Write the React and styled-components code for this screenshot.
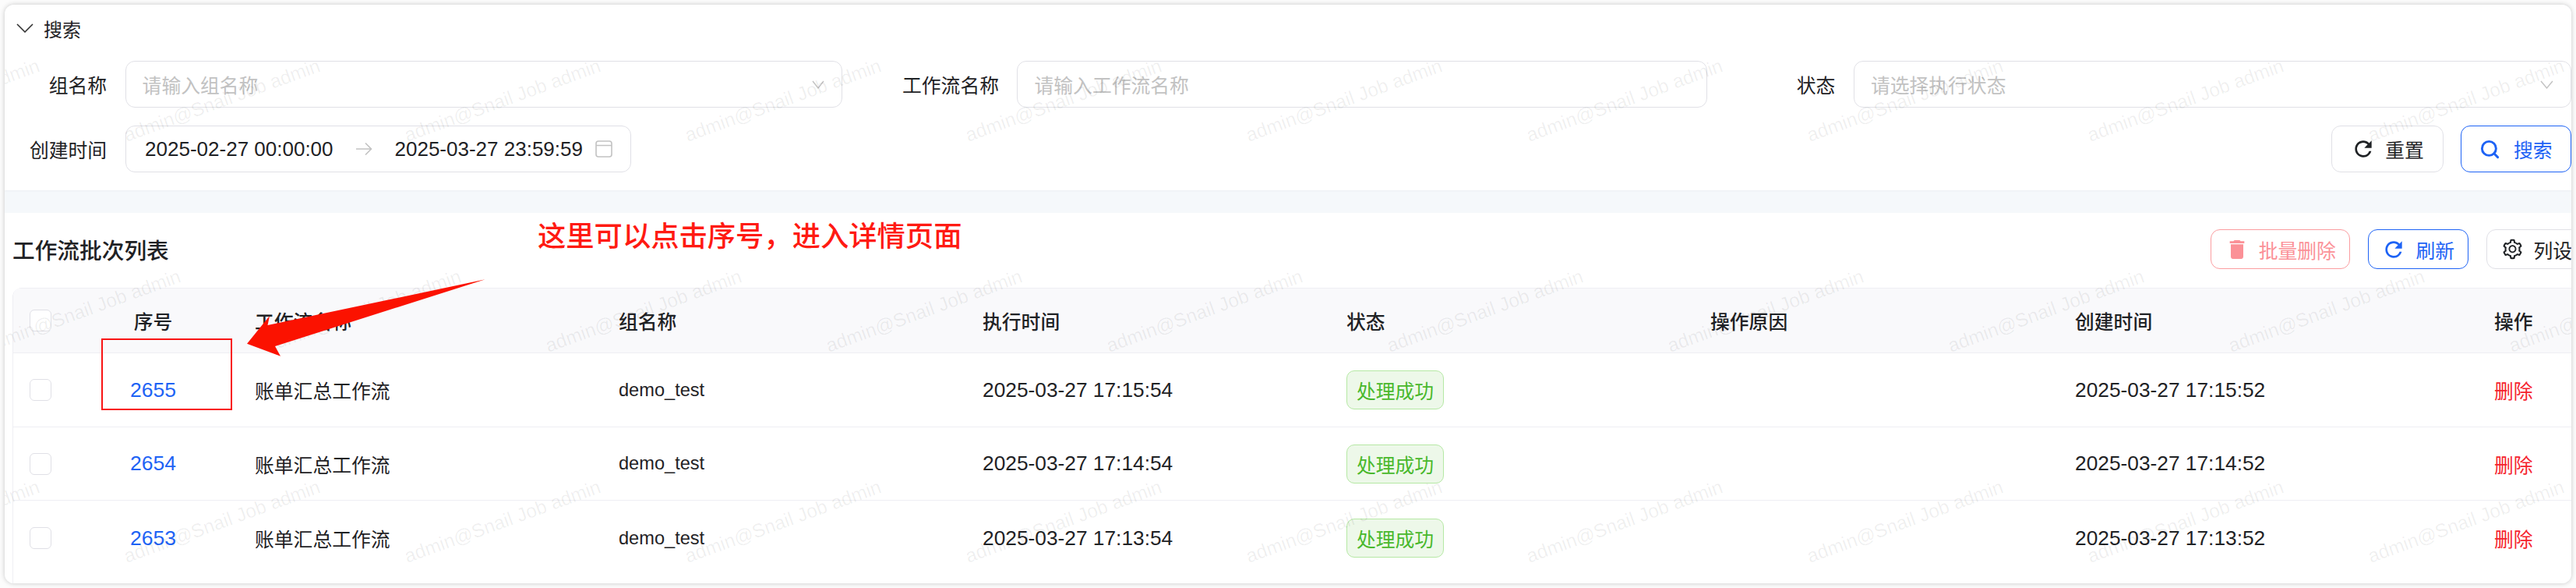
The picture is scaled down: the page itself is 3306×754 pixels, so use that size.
import React from "react";
import styled, { createGlobalStyle } from "styled-components";
import { MdRefresh, MdDelete } from "react-icons/md";
import { AiOutlineSetting } from "react-icons/ai";
import { Search } from "lucide-react";

const Global = createGlobalStyle`
  html, body { margin: 0; padding: 0; background: #fcfcfc; }
  body { font-family: "Liberation Sans", "Noto Sans CJK SC", sans-serif; font-size: 24.8px; color: #1f2225; overflow: hidden; }
  * { box-sizing: border-box; }
`;

const Page = styled.div`
  position: relative;
  width: 3306px;
  height: 754px;
  padding: 6px;
`;
const Frame = styled.div`
  position: relative;
  width: 3294px;
  height: 742px;
  border-radius: 12px;
  overflow: hidden;
  background: #f5f8fb;
  box-shadow: 0 0 6px rgba(0, 0, 0, 0.22);
`;
const SearchCard = styled.section`
  height: 238px;
  background: #fff;
  box-shadow: 0 1px 2px rgba(0, 0, 0, 0.04);
`;
const SearchHeader = styled.div`
  height: 60px;
  margin-bottom: 12px;
  padding-left: 15px;
  display: flex;
  align-items: center;
  gap: 13px;
  font-size: 24px;
`;
const FormGrid = styled.div`
  display: grid;
  grid-template-columns: 154.6px 920.4px 224.5px 886px 187.4px 921px;
  grid-auto-rows: 60px;
  row-gap: 23px;
`;
const Label = styled.label`
  display: flex;
  align-items: center;
  justify-content: flex-end;
  padding-right: 23.5px;
`;
const Field = styled.div`
  display: flex;
  align-items: center;
  height: 60px;
  padding: 0 ${(p) => p.$pr || 22}px 0 ${(p) => p.$pl || 21}px;
  border: 1.5px solid #e0e0e6;
  border-radius: 12px;
  width: ${(p) => p.$width || "100%"};
`;
const Placeholder = styled.span`
  flex: 1;
  color: #c2c2c2;
`;
const DateText = styled.span`
  font-size: 26px;
  white-space: nowrap;
`;
const ArrowSlot = styled.span`
  display: flex;
  width: 79px;
  justify-content: center;
  color: #c2c2c2;
`;
const CalSlot = styled.span`
  display: flex;
  margin-left: 16px;
  color: #c2c2c2;
`;
const Actions = styled.div`
  display: flex;
  justify-content: flex-end;
  gap: 22px;
`;
const Button = styled.button`
  display: inline-flex;
  align-items: center;
  justify-content: center;
  flex: none;
  height: ${(p) => p.$h || 60}px;
  width: ${(p) => p.$w}px;
  gap: ${(p) => p.$gap || 12}px;
  padding: 0;
  background: #fff;
  border: 1.5px solid ${(p) => p.$border || "#e0e0e6"};
  border-radius: 12px;
  color: ${(p) => p.$color || "#1f2225"};
  font: inherit;
`;
const TableCard = styled.section`
  position: absolute;
  left: 0;
  top: 267px;
  width: 3339px;
  height: 475px;
  padding: 21px 0 0 10px;
  background: #fff;
`;
const TableHeader = styled.div`
  display: flex;
  align-items: center;
  justify-content: space-between;
  height: 51px;
  margin-bottom: 24px;
`;
const Title = styled.h2`
  margin: 0;
  font-size: 28.7px;
  font-weight: 500;
`;
const Toolbar = styled.div`
  display: flex;
  gap: 22.5px;
`;
const TableWrap = styled.div`
  height: 379px;
  border-left: 1.5px solid #eeeef3;
  border-top-left-radius: 12px;
  overflow: hidden;
`;
const columns = "70.5px 218px 467px 467px 467px 467px 468px 538px 171px";
const HeadRow = styled.div`
  display: grid;
  grid-template-columns: ${columns};
  height: 84px;
  background: #f9f9fb;
  border-top: 1.5px solid #eeeef3;
  border-bottom: 1.5px solid #eeeef3;
  font-weight: 500;
`;
const Row = styled.div`
  display: grid;
  grid-template-columns: ${columns};
  height: ${(p) => p.$h}px;
  border-bottom: ${(p) => (p.$last ? "none" : "1.5px solid #eeeef3")};
`;
const Cell = styled.div`
  display: flex;
  align-items: center;
  padding-left: 21.5px;
  white-space: nowrap;
`;
const CenterCell = styled.div`
  display: flex;
  align-items: center;
  justify-content: center;
`;
const Check = styled.span`
  display: block;
  width: 28px;
  height: 28px;
  background: #fff;
  border: 1.5px solid #e0e0e6;
  border-radius: 6px;
`;
const SeqLink = styled.a`
  color: #1e63f5;
  font-size: 26.5px;
`;
const DateCell = styled.span`
  font-size: 26.3px;
`;
const GroupText = styled.span`
  font-size: 23.6px;
`;
const Tag = styled.span`
  display: inline-flex;
  align-items: center;
  justify-content: center;
  width: 125px;
  height: 50px;
  background: #edf8e9;
  border: 1.5px solid #b5e8a4;
  border-radius: 10px;
  color: #49b82c;
`;
const DeleteLink = styled.a`
  color: #f5222d;
`;
const WatermarkLayer = styled.div`
  position: absolute;
  inset: 0;
  pointer-events: none;
  overflow: hidden;
`;
const Mark = styled.span`
  position: absolute;
  width: 300px;
  text-align: center;
  font-size: 24.5px;
  line-height: 30px;
  white-space: nowrap;
  color: rgba(0, 0, 0, 0.065);
  transform: translate(-50%, -50%) rotate(-20deg);
`;
const Note = styled.div`
  position: absolute;
  left: 690px;
  top: 281px;
  font-size: 36.3px;
  line-height: 46px;
  font-weight: 500;
  color: #ff1a12;
  white-space: nowrap;
`;
const RedBox = styled.div`
  position: absolute;
  left: 130px;
  top: 434px;
  width: 168px;
  height: 92px;
  border: 2px solid #f91414;
`;
const ArrowArt = styled.svg`
  position: absolute;
  left: 0;
  top: 0;
`;

const Chevron = ({ w = 22, h = 12, color = "#333", sw = 1.6 }) => (
  <svg width={w} height={h} viewBox={`0 0 ${w} ${h}`} fill="none">
    <path d={`M1 1 L${w / 2} ${h - 1} L${w - 1} 1`} stroke={color} strokeWidth={sw} />
  </svg>
);
const ThinArrow = () => (
  <svg width="22" height="18" viewBox="0 0 22 18" fill="none" stroke="currentColor" strokeWidth="1.6">
    <path d="M1 9 H20 M13 1.5 L20.5 9 L13 16.5" />
  </svg>
);
const Calendar = () => (
  <svg width="22" height="22" viewBox="0 0 22 22" fill="none" stroke="currentColor" strokeWidth="1.6">
    <rect x="1" y="1" width="20" height="20" rx="3" />
    <path d="M1 6.5 H21" />
  </svg>
);

const rowsData = [
  { id: 2655, run: "17:15:54", created: "17:15:52", h: 95 },
  { id: 2654, run: "17:14:54", created: "17:14:52", h: 94 },
  { id: 2653, run: "17:13:54", created: "17:13:52", h: 96, last: true },
];
const heads = ["工作流名称", "组名称", "执行时间", "状态", "操作原因", "创建时间", "操作"];

const marks = [];
[123, 393, 663].forEach((y, r) => {
  const start = r % 2 === 0 ? -81 : 100;
  for (let i = 0; i < 10; i++) marks.push({ x: start + i * 360, y });
});

export default function App() {
  return (
    <Page>
      <Global />
      <Frame>
        <SearchCard>
          <SearchHeader>
            <Chevron />
            <span>搜索</span>
          </SearchHeader>
          <FormGrid>
            <Label>组名称</Label>
            <Field>
              <Placeholder>请输入组名称</Placeholder>
              <Chevron w={16} h={11} color="#c2c2c2" sw={1.4} />
            </Field>
            <Label>工作流名称</Label>
            <Field>
              <Placeholder>请输入工作流名称</Placeholder>
            </Field>
            <Label>状态</Label>
            <Field>
              <Placeholder>请选择执行状态</Placeholder>
              <Chevron w={17} h={11} color="#c2c2c2" sw={1.4} />
            </Field>
            <Label>创建时间</Label>
            <Field $width="649.5px" $pl={24.5} $pr={20}>
              <DateText>2025-02-27 00:00:00</DateText>
              <ArrowSlot>
                <ThinArrow />
              </ArrowSlot>
              <DateText>2025-03-27 23:59:59</DateText>
              <CalSlot>
                <Calendar />
              </CalSlot>
            </Field>
            <span />
            <span />
            <span />
            <Actions>
              <Button $w={143.5}>
                <MdRefresh size={32} />
                <span>重置</span>
              </Button>
              <Button $w={142} $gap={17} $border="#1e63f5" $color="#1e63f5">
                <Search size={27} strokeWidth={2.6} />
                <span>搜索</span>
              </Button>
            </Actions>
          </FormGrid>
        </SearchCard>
        <TableCard>
          <TableHeader>
            <Title>工作流批次列表</Title>
            <Toolbar>
              <Button $w={179.5} $h={51} $border="#fb9da0" $color="#fb9197">
                <MdDelete size={32} />
                <span>批量删除</span>
              </Button>
              <Button $w={129.5} $h={51} $border="#1e63f5" $color="#1e63f5">
                <MdRefresh size={32} />
                <span>刷新</span>
              </Button>
              <Button $w={154.5} $h={51} $gap={13}>
                <AiOutlineSetting size={29} />
                <span>列设置</span>
              </Button>
            </Toolbar>
          </TableHeader>
          <TableWrap>
            <HeadRow>
              <CenterCell>
                <Check />
              </CenterCell>
              <CenterCell>序号</CenterCell>
              {heads.map((h) => (
                <Cell key={h}>{h}</Cell>
              ))}
            </HeadRow>
            {rowsData.map((r) => (
              <Row key={r.id} $h={r.h} $last={r.last}>
                <CenterCell>
                  <Check />
                </CenterCell>
                <CenterCell>
                  <SeqLink>{r.id}</SeqLink>
                </CenterCell>
                <Cell>账单汇总工作流</Cell>
                <Cell>
                  <GroupText>demo_test</GroupText>
                </Cell>
                <Cell>
                  <DateCell>2025-03-27 {r.run}</DateCell>
                </Cell>
                <Cell>
                  <Tag>处理成功</Tag>
                </Cell>
                <Cell />
                <Cell>
                  <DateCell>2025-03-27 {r.created}</DateCell>
                </Cell>
                <Cell>
                  <DeleteLink>删除</DeleteLink>
                </Cell>
              </Row>
            ))}
          </TableWrap>
        </TableCard>
        <WatermarkLayer>
          {marks.map((m, i) => (
            <Mark key={i} style={{ left: m.x, top: m.y }}>
              admin@Snail Job admin
            </Mark>
          ))}
        </WatermarkLayer>
      </Frame>
      <Note>这里可以点击序号，进入详情页面</Note>
      <RedBox />
      <ArrowArt width="700" height="500" viewBox="0 0 700 500">
        <polygon points="622.7,358.3 343.5,417 346,405 317,440.7 360,456.7 353,444" fill="#fb1200" />
      </ArrowArt>
    </Page>
  );
}
